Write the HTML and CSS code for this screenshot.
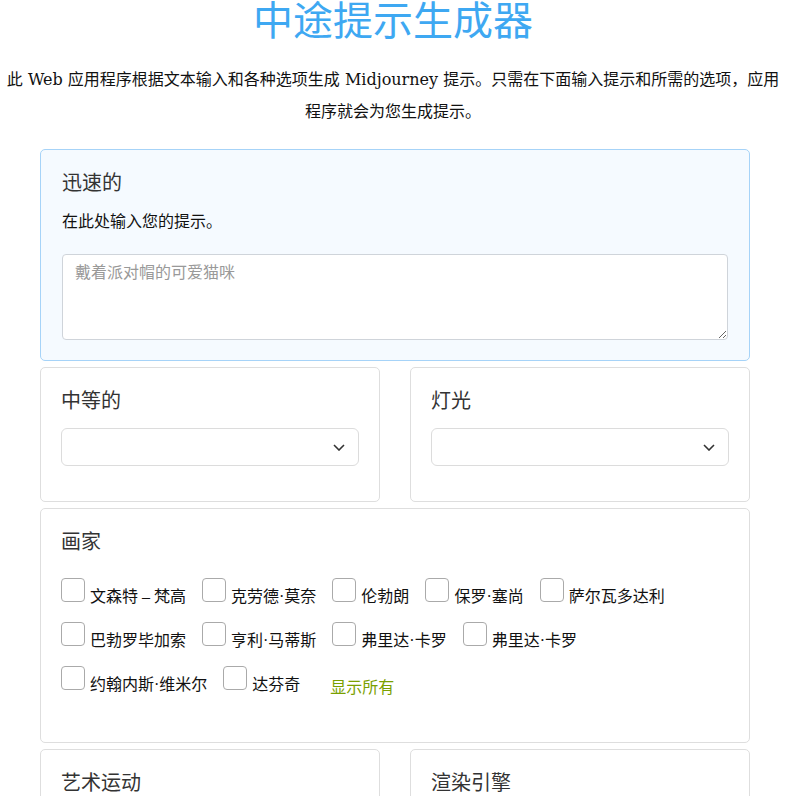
FILE: index.html
```html
<!DOCTYPE html>
<html lang="zh-CN">
<head>
<meta charset="utf-8">
<title>中途提示生成器</title>
<link rel="stylesheet" href="styles.css">
</head>
<body>
<h1 class="title">中途提示生成器</h1>
<p class="intro">此 Web 应用程序根据文本输入和各种选项生成 Midjourney 提示。只需在下面输入提示和所需的选项，应用程序就会为您生成提示。</p>
<main class="form">
  <section class="card card-prompt card-wide">
    <h2 class="card-title">迅速的</h2>
    <p class="hint">在此处输入您的提示。</p>
    <textarea class="prompt-input" placeholder="戴着派对帽的可爱猫咪"></textarea>
  </section>

  <section class="card">
    <h2 class="card-title">中等的</h2>
    <div class="select-wrap">
      <select class="select"><option></option></select>
      <svg class="chev" viewBox="0 0 12 7" aria-hidden="true"><path d="M1 1l5 5 5-5"/></svg>
    </div>
  </section>

  <section class="card">
    <h2 class="card-title">灯光</h2>
    <div class="select-wrap">
      <select class="select"><option></option></select>
      <svg class="chev" viewBox="0 0 12 7" aria-hidden="true"><path d="M1 1l5 5 5-5"/></svg>
    </div>
  </section>

  <section class="card card-wide">
    <h2 class="card-title">画家</h2>
    <div class="options">
      <label class="opt"><input type="checkbox" class="box"><span>文森特 – 梵高</span></label>
      <label class="opt"><input type="checkbox" class="box"><span>克劳德·莫奈</span></label>
      <label class="opt"><input type="checkbox" class="box"><span>伦勃朗</span></label>
      <label class="opt"><input type="checkbox" class="box"><span>保罗·塞尚</span></label>
      <label class="opt"><input type="checkbox" class="box"><span>萨尔瓦多达利</span></label>
      <label class="opt"><input type="checkbox" class="box"><span>巴勃罗毕加索</span></label>
      <label class="opt"><input type="checkbox" class="box"><span>亨利·马蒂斯</span></label>
      <label class="opt"><input type="checkbox" class="box"><span>弗里达·卡罗</span></label>
      <label class="opt"><input type="checkbox" class="box"><span>弗里达·卡罗</span></label>
      <label class="opt"><input type="checkbox" class="box"><span>约翰内斯·维米尔</span></label>
      <label class="opt"><input type="checkbox" class="box"><span>达芬奇</span></label>
      <a class="show-all" href="#">显示所有</a>
    </div>
  </section>

  <section class="card">
    <h2 class="card-title">艺术运动</h2>
    <div class="select-wrap">
      <select class="select"><option></option></select>
      <svg class="chev" viewBox="0 0 12 7" aria-hidden="true"><path d="M1 1l5 5 5-5"/></svg>
    </div>
  </section>

  <section class="card">
    <h2 class="card-title">渲染引擎</h2>
    <div class="select-wrap">
      <select class="select"><option></option></select>
      <svg class="chev" viewBox="0 0 12 7" aria-hidden="true"><path d="M1 1l5 5 5-5"/></svg>
    </div>
  </section>
</main>
</body>
</html>
```

FILE: styles.css
```css
body {
  margin: 0;
  background: #fff;
  color: #111;
  font-family: "Liberation Serif", "Noto Sans CJK SC", serif;
}

.title {
  margin: 0;
  text-align: center;
  font-size: 40px;
  line-height: 44px;
  font-weight: 400;
  color: #3ea8f2;
}

.intro {
  margin: 20px 4px 0;
  text-align: center;
  font-family: "DejaVu Serif", "Noto Sans CJK SC", serif;
  font-size: 16px;
  line-height: 32px;
}

.form {
  display: grid;
  grid-template-columns: 1fr 1fr;
  gap: 6px 30px;
  margin: 21px 36px 0 40px;
}

.card {
  border: 1px solid #dedede;
  border-radius: 5px;
  padding: 18px 20px 20px;
  background: #fff;
}

.card-wide {
  grid-column: 1 / -1;
}

.card-prompt {
  background: #f5faff;
  border-color: #a6d3f8;
  padding-left: 21px;
  padding-right: 21px;
}

.card-title {
  margin: 0 0 12px;
  font-size: 20px;
  line-height: 30px;
  font-weight: 400;
  color: #333;
}

.hint {
  margin: 0 0 20px;
  font-size: 16px;
  line-height: 24px;
}

.prompt-input {
  display: block;
  width: 100%;
  height: 86px;
  box-sizing: border-box;
  margin: 0;
  padding: 6px 12px;
  border: 1px solid #cfd4da;
  border-radius: 4px;
  background: #fff;
  font-family: "Liberation Serif", "Noto Sans CJK SC", serif;
  font-size: 16px;
  line-height: 24px;
  resize: vertical;
}

.prompt-input::placeholder {
  color: #999;
}

.select-wrap {
  position: relative;
  margin-bottom: 15px;
}

.select {
  display: block;
  width: 100%;
  height: 38px;
  margin: 0;
  box-sizing: border-box;
  appearance: none;
  -webkit-appearance: none;
  border: 1px solid #dcdcdc;
  border-radius: 6px;
  background: #fff;
}

.chev {
  position: absolute;
  right: 14px;
  top: 16px;
  width: 12px;
  height: 7px;
  fill: none;
  stroke: #333;
  stroke-width: 1.6;
  pointer-events: none;
}

.options {
  display: flex;
  flex-wrap: wrap;
  row-gap: 20px;
  margin: 21px 0 32px;
}

.opt {
  display: flex;
  align-items: baseline;
  gap: 5px;
  height: 24px;
  margin-right: 16px;
  font-size: 16px;
  white-space: nowrap;
  color: #111;
}

.box {
  appearance: none;
  -webkit-appearance: none;
  flex: none;
  width: 24px;
  height: 24px;
  margin: 0;
  box-sizing: border-box;
  border: 1px solid #aaa;
  border-radius: 4px;
  background: #fff;
}

.show-all {
  display: block;
  height: 24px;
  box-sizing: border-box;
  padding: 10px 0 0 14px;
  font-size: 16px;
  line-height: 24px;
  color: #7aa000;
  text-decoration: none;
}
```
